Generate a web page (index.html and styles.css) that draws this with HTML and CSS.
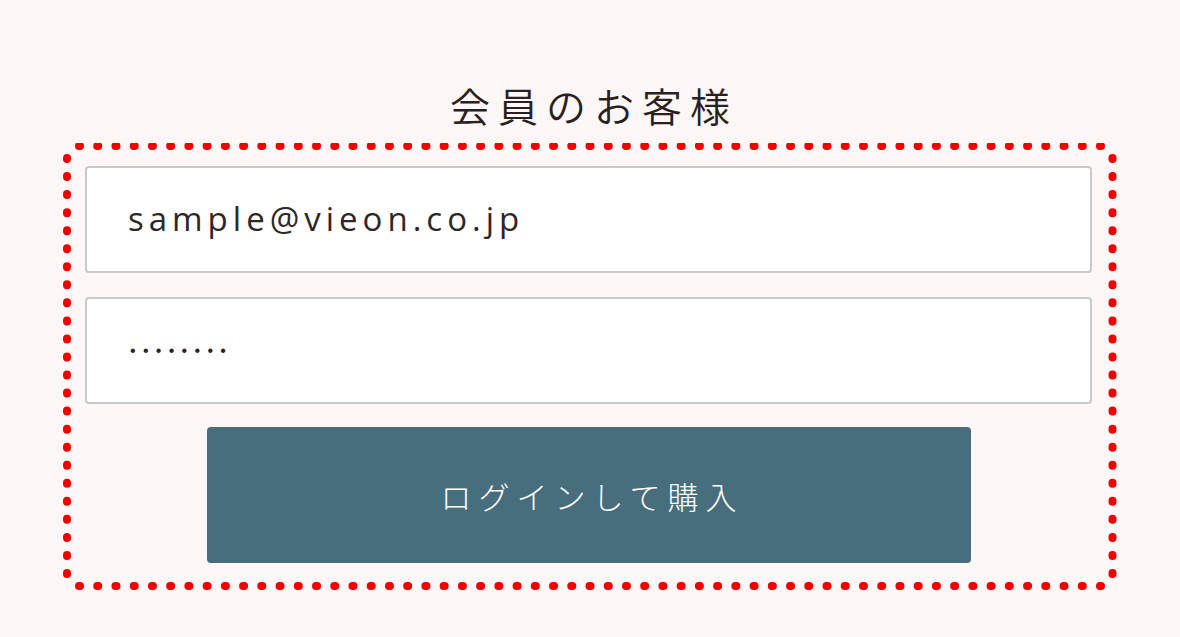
FILE: index.html
```html
<!DOCTYPE html>
<html lang="ja">
<head>
<meta charset="utf-8">
<title>会員のお客様</title>
<link rel="stylesheet" href="styles.css">
</head>
<body>
<main class="page">
  <h2 class="title">会員のお客様</h2>
  <form class="login-box">
    <svg class="dots" width="1054" height="447" viewBox="0 0 1054 447" aria-hidden="true">
      <g fill="none" stroke="#f20000" stroke-width="8" stroke-linecap="round">
        <line x1="16" y1="3" x2="1038" y2="3" stroke-dasharray="1 17.232"/>
        <line x1="16" y1="443" x2="1038" y2="443" stroke-dasharray="1 17.232"/>
        <line x1="4" y1="15" x2="4" y2="431" stroke-dasharray="1 17.043"/>
        <line x1="1049.5" y1="15" x2="1049.5" y2="431" stroke-dasharray="1 17.043"/>
      </g>
    </svg>
    <div class="field"><span class="value">sample@vieon.co.jp</span></div>
    <div class="field"><span class="secret">••••••••</span></div>
    <button type="button" class="submit">ログインして購入</button>
  </form>
</main>
</body>
</html>
```

FILE: styles.css
```css
html, body {
  margin: 0;
  padding: 0;
}
body {
  background: #fdf7f7;
  width: 1180px;
  height: 637px;
  overflow: hidden;
  font-family: "Noto Sans CJK JP", sans-serif;
  color: #2f2626;
}
.page {
  display: flex;
  flex-direction: column;
  align-items: flex-start;
  padding-top: 80px;
}
.title {
  align-self: stretch;
  margin: 0 0 13px 0;
  text-align: center;
  font-size: 40px;
  line-height: 50px;
  font-weight: 350;
  letter-spacing: 8px;
  padding-left: 8px;
  color: #2a2020;
}
.login-box {
  position: relative;
  box-sizing: border-box;
  margin: 0 0 0 63px;
  width: 1054px;
  height: 447px;
  padding: 23px 25px 27px 22px;
  display: flex;
  flex-direction: column;
  align-items: stretch;
  gap: 24px;
}
.dots {
  position: absolute;
  left: 0;
  top: 0;
  pointer-events: none;
}
.field {
  box-sizing: border-box;
  height: 107px;
  background: #ffffff;
  border: 2px solid #c9c9c9;
  border-radius: 4px;
  display: flex;
  align-items: center;
  padding-left: 41px;
}
.field + .field {
  margin-bottom: -1px;
}
.value {
  font-family: "Open Sans", sans-serif;
  font-size: 33px;
  letter-spacing: 5px;
  color: #2f2626;
  padding-bottom: 2px;
}
.secret {
  font-family: "Liberation Sans", sans-serif;
  font-size: 16px;
  letter-spacing: 7.3px;
  color: #2a2222;
  padding-left: 2px;
}
.submit {
  align-self: center;
  width: 764px;
  height: 136px;
  border: none;
  border-radius: 4px;
  background: #486d7c;
  color: #ffffff;
  font-family: "Noto Sans CJK JP", sans-serif;
  font-size: 31px;
  font-weight: 300;
  letter-spacing: 7px;
  padding: 0 0 0 7px;
  margin: 0;
}
```
